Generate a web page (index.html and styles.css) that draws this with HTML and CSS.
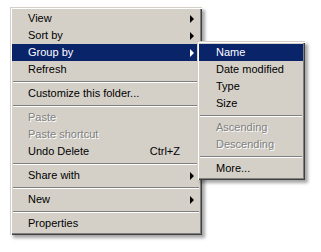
FILE: index.html
```html
<!DOCTYPE html>
<html>
<head>
<meta charset="utf-8">
<link rel="stylesheet" href="styles.css">
</head>
<body>
<div class="stage">
  <div class="menu main">
    <div class="item sub">View<span class="arrow"></span></div>
    <div class="item sub">Sort by<span class="arrow"></span></div>
    <div class="item sub active">Group by<span class="arrow"></span></div>
    <div class="item">Refresh</div>
    <div class="sep"></div>
    <div class="item">Customize this folder...</div>
    <div class="sep"></div>
    <div class="item disabled">Paste</div>
    <div class="item disabled">Paste shortcut</div>
    <div class="item">Undo Delete<span class="key">Ctrl+Z</span></div>
    <div class="sep"></div>
    <div class="item sub">Share with<span class="arrow"></span></div>
    <div class="sep"></div>
    <div class="item sub">New<span class="arrow"></span></div>
    <div class="sep"></div>
    <div class="item">Properties</div>
  </div>
  <div class="menu submenu">
    <div class="item active">Name</div>
    <div class="item">Date modified</div>
    <div class="item">Type</div>
    <div class="item">Size</div>
    <div class="sep"></div>
    <div class="item disabled">Ascending</div>
    <div class="item disabled">Descending</div>
    <div class="sep"></div>
    <div class="item">More...</div>
  </div>
</div>
</body>
</html>
```
FILE: styles.css
```css
html, body {
  margin: 0;
  padding: 0;
  background: #fff;
}
body {
  font-family: "Liberation Sans", Arial, sans-serif;
  font-size: 11px;
  color: #000;
}
.stage {
  position: relative;
  width: 321px;
  height: 252px;
  padding: 7px 0 0 10px;
  box-sizing: border-box;
}
.menu {
  background: #d4d0c8;
  box-sizing: border-box;
  padding: 3px 1px;
  box-shadow:
    inset 1px 1px 0 #d4d0c8,
    inset 2px 2px 0 #ffffff,
    inset -1px -1px 0 #404040,
    inset -2px -2px 0 #808080,
    3px 3px 3px rgba(0, 0, 0, 0.35);
  display: flex;
  flex-direction: column;
}
.main {
  width: 192px;
  padding-left: 2px;
  padding-right: 2px;
}
.submenu {
  position: absolute;
  left: 197px;
  top: 41px;
  width: 108px;
  padding-left: 2px;
  padding-right: 2px;
}
.item {
  height: 17px;
  line-height: 17px;
  padding-left: 16px;
  padding-right: 6px;
  display: flex;
  align-items: center;
  white-space: nowrap;
}
.submenu .item {
  padding-left: 17px;
}
.item.active {
  background: #0a246a;
  color: #fff;
}
.item.disabled {
  color: #808080;
  text-shadow: 1px 1px 0 #fff;
}
.arrow {
  margin-left: auto;
  width: 0;
  height: 0;
  border-top: 4px solid transparent;
  border-bottom: 4px solid transparent;
  border-left: 4px solid #000;
}
.active .arrow {
  border-left-color: #fff;
}
.key {
  margin-left: auto;
  margin-right: 14px;
}
.sep {
  height: 7px;
  box-sizing: border-box;
  margin: 0 1px;
  padding-top: 3px;
}
.sep::before {
  content: "";
  display: block;
  height: 1px;
  background: #808080;
  border-bottom: 1px solid #fff;
}
```
